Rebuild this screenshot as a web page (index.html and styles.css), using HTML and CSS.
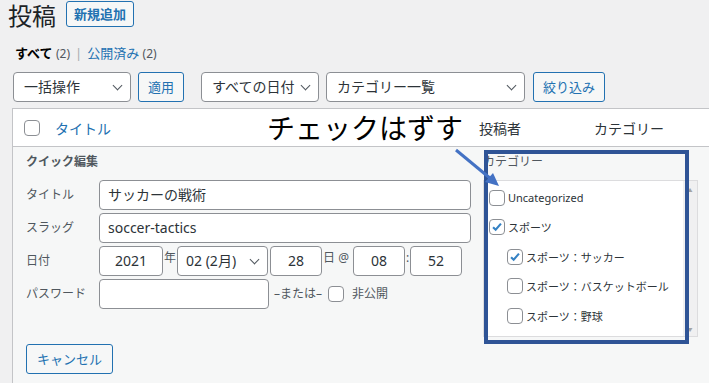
FILE: index.html
```html
<!DOCTYPE html>
<html lang="ja">
<head>
  <meta charset="UTF-8" />
  <title>投稿</title>
  <link rel="stylesheet" href="styles.css">
</head>
<body>
  <div class="head-row">
    <h1>投稿</h1>
    <button class="btn-outline strong">新規追加</button>
  </div>

  <ul class="subsub">
    <li class="current">すべて <span class="count">(2)</span></li>
    <li class="sep">|</li>
    <li><a>公開済み</a> <span class="count">(2)</span></li>
  </ul>

  <div class="filters">
    <div class="select w-bulk">一括操作<span class="chev"></span></div>
    <button class="btn-outline">適用</button>
    <div class="select w-date">すべての日付<span class="chev"></span></div>
    <div class="select w-cat">カテゴリー一覧<span class="chev"></span></div>
    <button class="btn-outline">絞り込み</button>
  </div>

  <div class="table">
    <div class="thead">
      <span class="cb"></span>
      <a class="col-title">タイトル</a>
      <span class="col-author">投稿者</span>
      <span class="col-cat">カテゴリー</span>
    </div>

    <div class="quick">
      <div class="cols">
        <div class="col-left">
          <div class="qe-title">クイック編集</div>
          <div class="field">
            <label>タイトル</label>
            <div class="input wide">サッカーの戦術</div>
          </div>
          <div class="field">
            <label>スラッグ</label>
            <div class="input wide">soccer-tactics</div>
          </div>
          <div class="field">
            <label>日付</label>
            <div class="input center w-year">2021</div>
            <span class="unit">年</span>
            <div class="select w-month">02 (2月)<span class="chev"></span></div>
            <div class="input center w-day">28</div>
            <span class="unit at">日 @</span>
            <div class="input center w-time">08</div>
            <span class="unit colon">:</span>
            <div class="input center w-time">52</div>
          </div>
          <div class="field">
            <label>パスワード</label>
            <div class="input w-pass"></div>
            <span class="unit or">–または–</span>
            <span class="cb small"></span>
            <span class="unit">非公開</span>
          </div>
        </div>

        <div class="col-right">
          <div class="cat-label">カテゴリー</div>
          <div class="cat-box">
            <ul class="cat-list">
              <li><span class="cb"></span>Uncategorized</li>
              <li><span class="cb checked"><svg viewBox="0 0 16 16"><path d="M3.5 8.2l3 3 6-7" /></svg></span>スポーツ</li>
              <li class="child"><span class="cb checked"><svg viewBox="0 0 16 16"><path d="M3.5 8.2l3 3 6-7" /></svg></span>スポーツ：サッカー</li>
              <li class="child"><span class="cb"></span>スポーツ：バスケットボール</li>
              <li class="child"><span class="cb"></span>スポーツ：野球</li>
            </ul>
            <div class="scrollbar"><span class="arr">▲</span><span class="arr">▼</span></div>
          </div>
        </div>
      </div>

      <div class="actions">
        <button class="btn-outline cancel">キャンセル</button>
      </div>
    </div>
  </div>

  <!-- annotation overlay -->
  <div class="note-text">チェックはずす</div>
  <div class="note-box"></div>
  <svg class="note-arrow" width="60" height="50" viewBox="0 0 60 50">
    <line x1="3" y1="2" x2="38" y2="31" />
    <polygon points="46,38 32,34 40,25" />
  </svg>
</body>
</html>
```

FILE: styles.css
```css
body {
  margin: 0;
  background: #f0f0f1;
  font-family: "Noto Sans", "Noto Sans CJK JP", sans-serif;
  font-size: 13px;
  color: #3c434a;
  overflow: hidden;
  position: relative;
  height: 383px;
}
.head-row {
  display: flex;
  align-items: center;
  gap: 10px;
  height: 30px;
  padding: 1px 0 0 8px;
}
h1 {
  margin: 0;
  font-size: 24px;
  font-weight: 400;
  line-height: 28px;
  color: #1d2327;
}
.btn-outline {
  height: 30px;
  padding: 0 9px;
  border: 1px solid #2271b1;
  border-radius: 3px;
  background: #f6f7f7;
  color: #2271b1;
  font-family: inherit;
  font-size: 13px;
  line-height: 28px;
  box-sizing: border-box;
}
.btn-outline.strong {
  height: 26px;
  line-height: 24px;
  padding: 0 7px;
  font-weight: 700;
  margin-top: -4px;
}
.subsub {
  list-style: none;
  display: flex;
  gap: 5px;
  margin: 13px 0 0 15px;
  padding: 0;
  height: 18px;
  line-height: 18px;
}
.subsub .current { color: #000; font-weight: 700; }
.subsub .count { color: #50575e; font-weight: 400; font-size: 12px; }
.subsub .sep { color: #a7aaad; }
.subsub a { color: #2271b1; }

.filters {
  display: flex;
  align-items: center;
  margin: 10px 0 0 13px;
  height: 30px;
}
.select {
  position: relative;
  height: 30px;
  box-sizing: border-box;
  border: 1px solid #8c8f94;
  border-radius: 4px;
  background: #fff;
  padding: 0 24px 0 10px;
  line-height: 28px;
  font-size: 14px;
  color: #2c3338;
  white-space: nowrap;
}
.chev {
  position: absolute;
  right: 9px;
  top: 9px;
  width: 6px;
  height: 6px;
  border-right: 1.6px solid #50575e;
  border-bottom: 1.6px solid #50575e;
  transform: rotate(45deg);
}
.w-bulk { width: 118px; margin-right: 7px; }
.w-date { width: 118px; margin-left: 17px; margin-right: 7px; }
.w-cat { width: 199px; margin-right: 8px; }

.table {
  margin: 6px 0 0 12px;
  border: 1px solid #c3c4c7;
  border-right: none;
  background: #fff;
}
.thead {
  display: flex;
  align-items: center;
  height: 37px;
  border-bottom: 1px solid #c3c4c7;
  font-size: 14px;
}
.cb {
  display: inline-block;
  flex: none;
  width: 16px;
  height: 16px;
  box-sizing: border-box;
  border: 1px solid #8c8f94;
  border-radius: 4px;
  background: #fff;
}
.thead .cb { margin-left: 11px; }
.col-title { color: #2271b1; margin-left: 15px; width: 424px; }
.col-author { color: #2c3338; width: 115px; }
.col-cat { color: #2c3338; }

.quick {
  background: #f6f7f7;
  padding: 6px 0 14px 13px;
}
.cols {
  display: flex;
  gap: 12px;
}
.col-left { width: 445px; }
.qe-title {
  font-size: 12px;
  font-weight: 700;
  color: #50575e;
  line-height: 18px;
  margin-bottom: 9px;
}
.field {
  display: flex;
  align-items: flex-start;
  height: 30px;
  margin-bottom: 3px;
}
.field label {
  width: 73px;
  flex: none;
  line-height: 30px;
  font-size: 12px;
  color: #50575e;
}
.input {
  height: 30px;
  box-sizing: border-box;
  border: 1px solid #8c8f94;
  border-radius: 4px;
  background: #fff;
  padding: 0 8px;
  line-height: 28px;
  font-size: 14px;
  color: #2c3338;
}
.input.center { text-align: center; }
.wide { width: 372px; }
.w-year { width: 64px; }
.w-month { width: 91px; font-size: 14px; padding-left: 8px; margin-right: 2px; }
.w-day { width: 52px; }
.w-time { width: 52px; }
.w-pass { width: 170px; }
.unit {
  line-height: 24px;
  padding: 0 1px;
  font-size: 12px;
  color: #50575e;
}
.unit.at { width: 31px; box-sizing: border-box; padding: 0 0 0 1px; }
.unit.colon { width: 5px; padding: 0; text-align: center; }
.unit.or { line-height: 30px; padding: 0 4px 0 5px; font-size: 12px; }
.field .cb.small { margin: 7px 7px 0 2px; }
.field .cb.small + .unit { line-height: 30px; font-size: 12px; }

.cat-label {
  font-size: 12px;
  color: #50575e;
  line-height: 18px;
  margin-bottom: 9px;
}
.cat-box {
  display: flex;
  width: 215px;
  height: 157px;
  box-sizing: border-box;
  border: 1px solid #dcdcde;
  background: #fff;
}
.cat-list {
  list-style: none;
  flex: 1;
  margin: 0;
  padding: 2px 0 0 5px;
  font-size: 11px;
  color: #2c3338;
}
.cat-list li {
  display: flex;
  align-items: center;
  height: 29.5px;
}
.cat-list li.child { padding-left: 18px; }
.cat-list .cb { margin-right: 3px; }
.cb.checked svg {
  width: 14px;
  height: 14px;
  display: block;
  fill: none;
  stroke: #3582c4;
  stroke-width: 2.4;
}
.scrollbar {
  width: 14px;
  background: #f0f0f1;
  display: flex;
  flex-direction: column;
  justify-content: space-between;
  align-items: center;
  padding: 6px 0 4px;
}
.arr {
  font-size: 5px;
  line-height: 6px;
  color: #a3a3a3;
}
.actions {
  margin-top: 7px;
}
.cancel {
  width: 87px;
  padding: 0;
}

.note-text {
  position: absolute;
  left: 267px;
  top: 106px;
  font-size: 28px;
  line-height: 42px;
  color: #000;
  font-family: "Noto Sans CJK JP", sans-serif;
}
.note-box {
  position: absolute;
  left: 484px;
  top: 150px;
  width: 205px;
  height: 194px;
  box-sizing: border-box;
  border: 4px solid #2f5496;
}
.note-arrow {
  position: absolute;
  left: 453px;
  top: 148px;
}
.note-arrow line {
  stroke: #4472c4;
  stroke-width: 3;
}
.note-arrow polygon {
  fill: #4472c4;
}
```
